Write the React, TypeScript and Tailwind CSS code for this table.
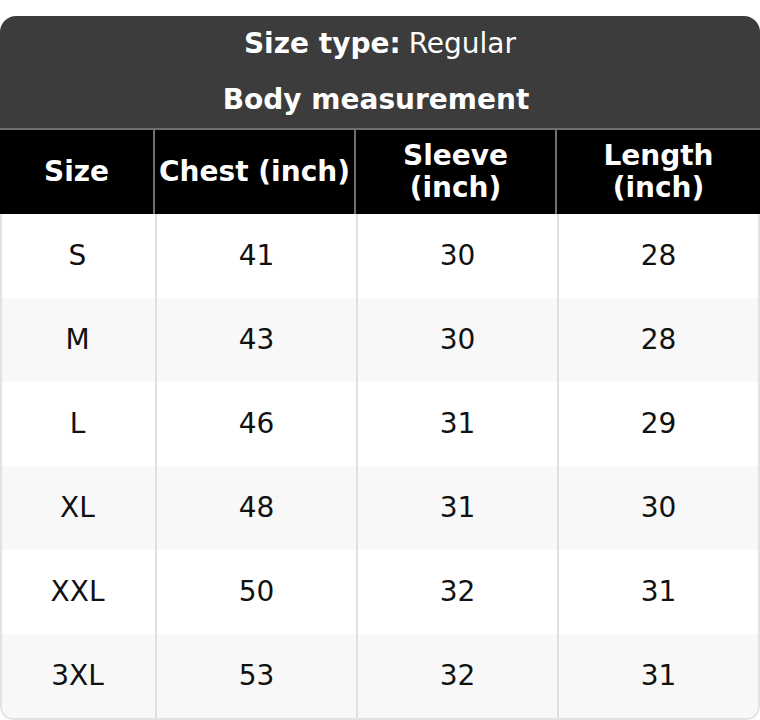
import React from 'react'

const rows = [
  ['S', '41', '30', '28'],
  ['M', '43', '30', '28'],
  ['L', '46', '31', '29'],
  ['XL', '48', '31', '30'],
  ['XXL', '50', '32', '31'],
  ['3XL', '53', '32', '31'],
]

const cols = 'grid grid-cols-[155px_201px_201px_1fr]'

export default function App() {
  return (
    <div className="min-h-screen bg-white pt-4 font-['DejaVu_Sans',sans-serif] text-[28px] leading-[32px]">
      <div className="w-[760px] rounded-t-[16px] overflow-hidden">
        {/* Title block */}
        <div className="bg-[#3c3c3c] text-white text-center">
          <div className="h-[56px] flex items-center justify-center">
            <span className="font-bold">Size type:</span>
            <span className="ml-[8px]">Regular</span>
          </div>
          <div className="h-[56px] flex items-center justify-center font-bold pr-[8px]">Body measurement</div>
        </div>

        {/* Column headings */}
        <div className={`${cols} bg-black text-white font-bold border-t-2 border-[#6e6e6e] h-[86px]`}>
          <div className="flex items-center justify-center text-center border-r-2 border-[#6e6e6e]">Size</div>
          <div className="flex items-center justify-center text-center border-r-2 border-[#6e6e6e]">Chest (inch)</div>
          <div className="flex items-center justify-center text-center border-r-2 border-[#6e6e6e]">
            Sleeve<br />(inch)
          </div>
          <div className="flex items-center justify-center text-center">
            Length<br />(inch)
          </div>
        </div>
      </div>

      {/* Body rows */}
      <div className="w-[760px] border-x-2 border-b-2 border-[#e2e2e2] rounded-b-[14px] overflow-hidden text-[#111]">
        {rows.map((r, i) => (
          <div key={r[0]} className={`${cols} h-[84px] ${i % 2 === 1 ? 'bg-[#f8f8f8]' : 'bg-white'}`}>
            {r.map((c, j) => (
              <div
                key={j}
                className={`flex items-center justify-center ${j < 3 ? 'border-r-2 border-[#e0e0e0]' : ''} ${j === 0 ? '-ml-[2px]' : ''}`}
              >
                {c}
              </div>
            ))}
          </div>
        ))}
      </div>
    </div>
  )
}
